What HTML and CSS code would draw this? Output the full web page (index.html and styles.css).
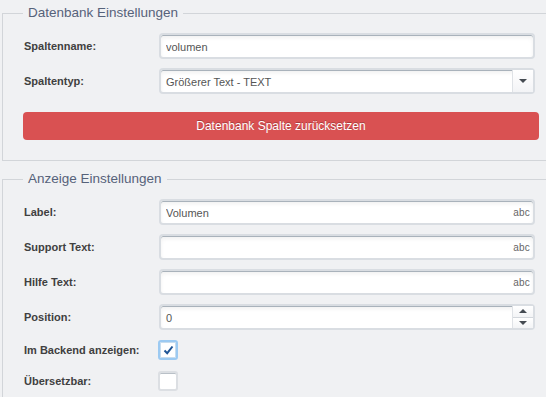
FILE: index.html
```html
<!DOCTYPE html>
<html lang="de">
<head>
    <meta charset="UTF-8">
    <meta name="viewport" content="width=device-width, initial-scale=1.0">
    <title>Spalte bearbeiten</title>
    <link rel="stylesheet" href="styles.css">
</head>
<body>
    <div class="panel">
        <fieldset class="group">
            <legend>Datenbank Einstellungen</legend>
            <div class="row">
                <label class="row-label">Spaltenname:</label>
                <div class="field">
                    <input class="text-input" type="text" value="volumen">
                </div>
            </div>
            <div class="row">
                <label class="row-label">Spaltentyp:</label>
                <div class="field select-box">
                    <span class="select-value">Größerer Text - TEXT</span>
                    <span class="select-arrow"><span class="tri tri-down"></span></span>
                </div>
            </div>
            <button class="btn-danger" type="button">Datenbank Spalte zurücksetzen</button>
        </fieldset>

        <fieldset class="group group-second">
            <legend>Anzeige Einstellungen</legend>
            <div class="row">
                <label class="row-label">Label:</label>
                <div class="field">
                    <input class="text-input" type="text" value="Volumen">
                    <span class="abc">abc</span>
                </div>
            </div>
            <div class="row">
                <label class="row-label">Support Text:</label>
                <div class="field">
                    <input class="text-input" type="text" value="">
                    <span class="abc">abc</span>
                </div>
            </div>
            <div class="row">
                <label class="row-label">Hilfe Text:</label>
                <div class="field">
                    <input class="text-input" type="text" value="">
                    <span class="abc">abc</span>
                </div>
            </div>
            <div class="row">
                <label class="row-label">Position:</label>
                <div class="field spinner">
                    <span class="spin-value">0</span>
                    <span class="spin-buttons">
                        <span class="spin-btn"><span class="tri tri-up"></span></span>
                        <span class="spin-btn"><span class="tri tri-down"></span></span>
                    </span>
                </div>
            </div>
            <div class="row row-check">
                <label class="row-label">Im Backend anzeigen:</label>
                <span class="check checked">
                    <svg width="11" height="10" viewBox="0 0 11 10"><path d="M1.5 5.5 L4.2 8.2 L9.5 1.5" fill="none" stroke="#1f5596" stroke-width="2"/></svg>
                </span>
            </div>
            <div class="row row-check">
                <label class="row-label">Übersetzbar:</label>
                <span class="check"></span>
            </div>
        </fieldset>
    </div>
</body>
</html>
```

FILE: styles.css
```css
:root {
    --page-bg: #f0f1f3;
    --line: #d2d5d9;
    --legend: #56627a;
    --label: #404040;
    --ring: #d9dde2;
    --danger: #d95152;
}

body {
    margin: 0;
    background: var(--page-bg);
    font-family: 'Liberation Sans', Arial, sans-serif;
    overflow: hidden;
}

.panel {
    width: 546px;
    height: 397px;
    padding-top: 4px;
    box-sizing: border-box;
    overflow: hidden;
}

.group {
    margin: 0 0 0 2px;
    border: 1px solid var(--line);
    border-right: none;
    padding: 11px 0 20px 21px;
}

.group-second {
    margin-top: 9px;
}

legend {
    margin-left: -1px;
    padding: 0 5px;
    font-size: 13.5px;
    line-height: 18px;
    color: var(--legend);
}

.row {
    display: flex;
    align-items: center;
    height: 26px;
    margin-bottom: 9px;
}

.row-check {
    height: 22px;
}

.row-label {
    width: 135px;
    font-size: 11px;
    font-weight: bold;
    color: var(--label);
}

.field {
    position: relative;
    width: 376px;
    height: 26px;
    box-sizing: border-box;
    border: 2px solid var(--ring);
    border-radius: 4px;
    background: #fff;
    box-shadow: inset 0 1px 0 #a9b2bb, inset 0 3px 4px rgba(0, 0, 0, 0.06);
}

.text-input {
    width: 100%;
    height: 100%;
    box-sizing: border-box;
    border: none;
    background: transparent;
    padding: 1px 0 0 5px;
    font: 11px 'Liberation Sans', Arial, sans-serif;
    color: #555;
    outline: none;
}

.abc {
    position: absolute;
    right: 3px;
    top: 6px;
    font-size: 10px;
    color: #666;
    letter-spacing: 0.2px;
}

.select-box,
.spinner {
    display: flex;
    align-items: stretch;
}

.select-value,
.spin-value {
    flex: 1;
    display: flex;
    align-items: center;
    padding: 1px 0 0 5px;
    font-size: 11px;
    color: #555;
}

.select-arrow {
    width: 20px;
    display: flex;
    align-items: center;
    justify-content: center;
    border-left: 1px solid #dfe2e6;
    background: linear-gradient(#fff, #f3f4f6);
}

.spin-buttons {
    width: 20px;
    display: flex;
    flex-direction: column;
    border-left: 1px solid #dfe2e6;
}

.spin-btn {
    flex: 1;
    display: flex;
    align-items: center;
    justify-content: center;
    background: linear-gradient(#fff, #f3f4f6);
}

.spin-btn + .spin-btn {
    border-top: 1px solid #d3d7dc;
}

.tri {
    width: 0;
    height: 0;
    border-left: 4px solid transparent;
    border-right: 4px solid transparent;
}

.tri-down {
    border-top: 4px solid #454b52;
}

.tri-up {
    border-bottom: 4px solid #454b52;
}

.btn-danger {
    display: block;
    width: 516px;
    height: 28px;
    margin: 18px 0 0 -1px;
    border: none;
    border-radius: 4px;
    background: var(--danger);
    color: #fff;
    font-family: inherit;
    font-size: 12px;
    text-shadow: 0 -1px 0 rgba(0, 0, 0, 0.25);
}

.check {
    width: 20px;
    height: 20px;
    box-sizing: border-box;
    margin-left: -1px;
    border: 2px solid #dcdfe3;
    border-radius: 3px;
    background: #fff;
    box-shadow: inset 0 1px 0 #b9c0c7;
    display: flex;
    align-items: center;
    justify-content: center;
}

.check.checked {
    border-color: #9ccaf2;
    box-shadow: inset 0 0 0 1px #c7ddef;
}
```
